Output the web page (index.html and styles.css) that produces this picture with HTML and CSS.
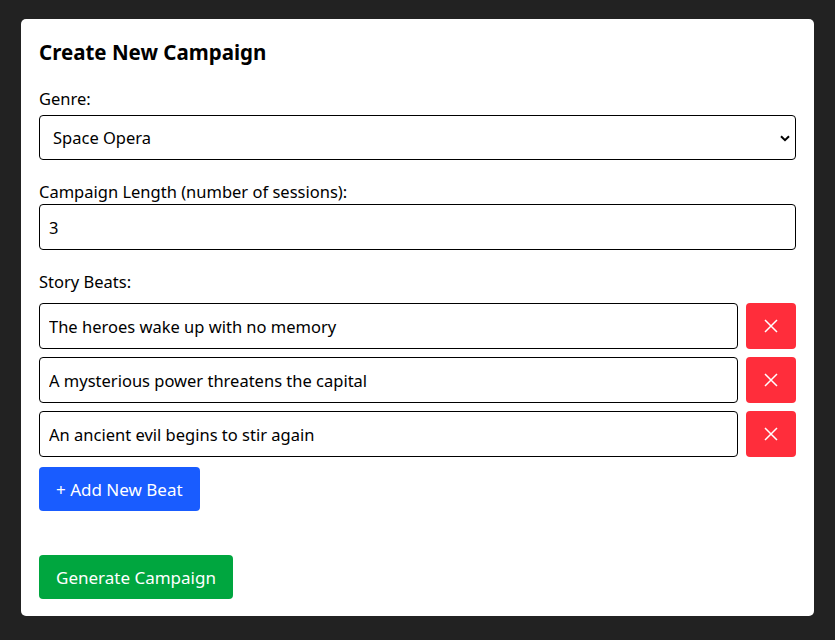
FILE: index.html
```html
<!DOCTYPE html>
<html lang="en">
<head>
  <meta charset="UTF-8" />
  <meta name="viewport" content="width=device-width, initial-scale=1.0"/>
  <title>Create New Campaign</title>
  <link rel="stylesheet" href="styles.css">
</head>
<body>
  <div class="card">
    <h2>Create New Campaign</h2>

    <div class="field">
      <label for="genre" class="genre-label">Genre:</label>
      <div class="select-wrap">
        <select id="genre">
          <option>Space Opera</option>
          <option>High Fantasy</option>
          <option>Cyberpunk</option>
          <option>Horror</option>
        </select>
        <svg class="chevron" width="10" height="7" viewBox="0 0 10 7"><path d="M1 1.2 L5 5.2 L9 1.2" fill="none" stroke="#000" stroke-width="2"/></svg>
      </div>
    </div>

    <div class="field">
      <label for="length">Campaign Length (number of sessions):</label>
      <input type="number" id="length" value="3">
    </div>

    <div class="field">
      <label class="beats-label">Story Beats:</label>
      <div class="beats" id="beats"></div>
      <button class="btn btn-add" onclick="addBeat('')">+ Add New Beat</button>
    </div>

    <button class="btn btn-generate">Generate Campaign</button>
  </div>

  <script>
    const beats = [
      'The heroes wake up with no memory',
      'A mysterious power threatens the capital',
      'An ancient evil begins to stir again'
    ];

    function addBeat(text) {
      const row = document.createElement('div');
      row.className = 'beat-row';
      row.innerHTML = `
        <input type="text" value="${text}">
        <button class="btn-remove" title="Remove">
          <svg width="14" height="14" viewBox="0 0 14 14"><path d="M1 1 L13 13 M13 1 L1 13" stroke="#fff" stroke-width="1.5"/></svg>
        </button>
      `;
      row.querySelector('.btn-remove').onclick = () => row.remove();
      document.getElementById('beats').appendChild(row);
    }

    beats.forEach(addBeat);
  </script>
</body>
</html>
```

FILE: styles.css
```css
body { margin: 0; padding: 19px 21px; background: #222222; font-family: "Noto Sans", sans-serif; font-size: 16.5px; color: #000; }
.card { background: #fff; border-radius: 5px; padding: 21px 18px 17px; }
h2 { margin: 0 0 23px; font-size: 20.5px; line-height: 24px; font-weight: 700; }
label { display: block; line-height: 24px; }
.field { margin-bottom: 20px; }
.genre-label { margin-bottom: 4px; }
.beats-label { margin-bottom: 9px; }
.select-wrap { position: relative; }
.chevron { position: absolute; right: 6px; top: 20px; pointer-events: none; }
select, input { display: block; width: 100%; box-sizing: border-box; height: 46px; border: 1px solid #000; border-radius: 4px; font-family: inherit; font-size: 16.5px; color: #000; background: #fff; }
.select-wrap select { height: 45px; }
select { appearance: none; padding: 0 13px; }
input { padding: 0 9px; }
input[type=number] { appearance: textfield; }
.beat-row { display: flex; gap: 8px; margin-bottom: 8px; }
.beat-row input { flex: 1; }
.btn-remove { width: 50px; height: 46px; flex: none; border: none; border-radius: 4px; background: #ff2d3b; display: flex; align-items: center; justify-content: center; padding: 0; }
.btn { border: none; border-radius: 4px; color: #fff; font-family: inherit; font-size: 17px; height: 44px; padding: 0 17px; }
.btn-add { background: #195cff; margin-top: 2px; }
.btn-generate { background: #00a63f; margin-top: 24px; }
```
